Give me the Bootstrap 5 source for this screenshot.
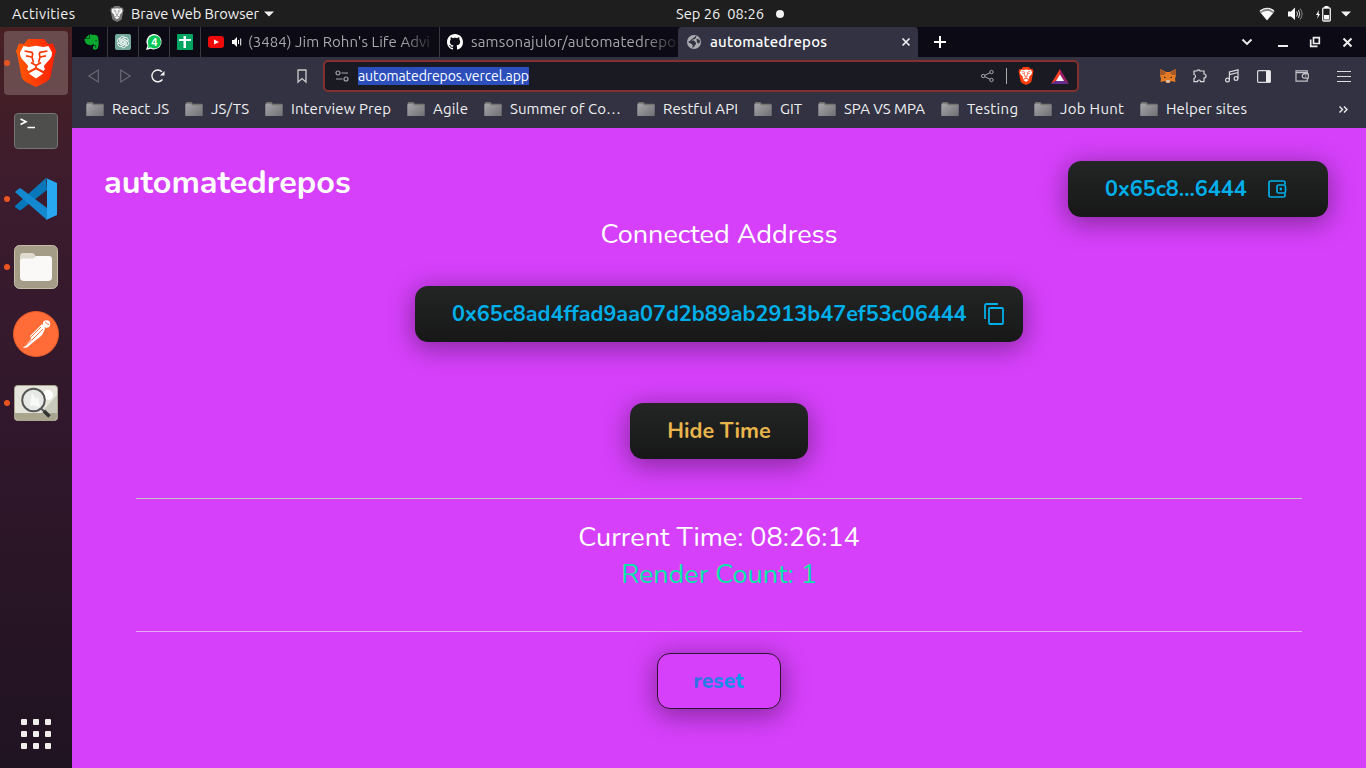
<!DOCTYPE html>
<html lang="en">
<head>
<meta charset="utf-8">
<meta name="viewport" content="width=device-width, initial-scale=1">
<title>automatedrepos</title>
<link href="https://cdn.jsdelivr.net/npm/bootstrap@5.3.0/dist/css/bootstrap.min.css" rel="stylesheet">
<style>
html,body{height:100%}
body{overflow:hidden;font-family:Ubuntu,"Noto Sans",sans-serif;font-size:15px;line-height:20px;color:#eee;background:#1e1e1e}
svg{display:block;flex:none;overflow:visible}
.desktop{width:1366px;height:768px}
.sysbar{display:grid;grid-template-columns:110px 566px 583px 29px 28px 25px 1fr;height:27px;background:#1e1e1e;color:#f2f2f2;align-items:center;font-size:14.67px}
.dock{width:72px;background:linear-gradient(#472023 0,#3b1b2e 25%,#30172b 55%,#201321 100%);padding-top:4px}
.tile{width:64px;height:64px;margin:0 4px 4px;border-radius:4px;position:relative}
.tile.active{background:#694a4d}
.tile.run::before{content:"";position:absolute;left:0;top:29px;width:6px;height:6px;border-radius:50%;background:#e95420}
.tabs{height:30px;background:#0c0a14;display:grid;grid-template-columns:36px 31px 31px 31px 239px 238px 240px 1fr}
.tb{display:flex;align-items:center;color:#a6a6ac;overflow:hidden;border-right:1px solid #3a3940;min-width:0}
.tb.gh{border:0}
.tb.on{background:#323242;border:0;border-radius:4px 4px 0 0;color:#fff;font-weight:500}
.faded{white-space:nowrap;-webkit-mask-image:linear-gradient(90deg,#000 84%,rgba(0,0,0,.15));mask-image:linear-gradient(90deg,#000 84%,rgba(0,0,0,.15))}
.toolbar{height:38px;background:#323242;display:grid;grid-template-columns:32px 31px 145px 27px 756px 97px 33px 32px 38px 43px 1fr;padding-left:16px;align-items:center}
.omni{height:32px;border:2px solid #84302f;border-radius:5px;background:#1a1a23;padding-left:10px;display:grid;grid-template-columns:23px 623px 25px 12px 33px 1fr;align-items:center}
.sel{background:#2c4fbc;color:#fff;display:inline-block;height:18px;line-height:18px;font-size:14px}
.marks{height:33px;background:#323242;padding:0 0 5px 14px}
.marks span{line-height:28px;color:#f0f0f2}
.lbl{white-space:pre;display:inline-block}
.site{background:#d640fb;font-family:Nunito,Lato,sans-serif;color:#fff;height:640px}
.brandline{height:88px;padding:33px 38px 0 32px}
.brandname{font-size:32.4px;font-weight:700;line-height:43px}
.cta{height:56px;border:0;border-radius:13px;background:linear-gradient(#232625,#171717);color:#00aee9;font-weight:700;font-size:21.6px;line-height:54px;box-shadow:0 5px 26px 2px rgba(0,0,0,.37);padding:0 37px;font-family:inherit}
.big{font-size:27px;line-height:37px;font-weight:400}
.rule{height:1px;width:1166px;background:#c6bfc4}
.reset{background:#d640fb;border:1px solid #2b1530;width:124px;padding:0;font-size:21px}
.reset span{background:linear-gradient(90deg,#3470e0,#009fe8);-webkit-background-clip:text;background-clip:text;color:transparent;font-weight:800}
</style>
</head>
<body>
<svg width="0" height="0" class="position-absolute">
<defs>
<linearGradient id="lion" x1="0" x2="1"><stop offset="0" stop-color="#ff5a00"/><stop offset=".55" stop-color="#ff3a0a"/><stop offset="1" stop-color="#ff1e00"/></linearGradient>
<linearGradient id="fold" x1="0" y1="0" x2="1" y2="1"><stop offset="0" stop-color="#a8a8ae"/><stop offset="1" stop-color="#707073"/></linearGradient>
<symbol id="face" viewBox="0 0 40 48">
<path d="M7.500 7 13 8 20 6.800 27 8 32.500 7 36 13.500Q36.500 16.500 34 20L28.500 26Q27 28 29 30L27.500 32 20 28 12.500 32 11 30Q13 28 11.500 26L6 20Q3.500 16.500 4 13.500Z" fill="#fff"/>
<path d="M13.500 34.500 20 31 26.500 34.500 20 39Z" fill="#fff" stroke="#fff"/>
<path d="M8.500 12 16 13.300 16.700 15 16 18 17.500 23.500M31.500 12 24 13.300 23.300 15 24 18 22.500 23.500M10 16.800 15.500 18M30 16.800 24.500 18M15 23.500 20 26.500 25 23.500M20 26V29" fill="none" stroke="currentColor" stroke-width="1.700"/>
</symbol>
<symbol id="shield" viewBox="0 0 40 48"><path d="M12 0H28L32 5 37 4.500 40 12 38.500 17 34.500 38Q33.500 41 30 43L20 48 10 43Q6.500 41 5.500 38L1.500 17 0 12 3 4.500 8 5Z"/></symbol>
<symbol id="folder" viewBox="0 0 18 15"><path d="M1 1Q1 .5 2 .5H6.500L7.500 2H17Q17.700 2 17.700 3V14H.3V3Z" fill="url(#fold)"/><path d="M1 1.200H6.500L7.300 2.500H17" fill="none" stroke="#77736e" stroke-width="1.300"/></symbol>
</defs>
</svg>
<div class="desktop d-flex flex-column">
<header class="sysbar">
  <div class="ps-2 ms-1"><span class="lbl" data-w="63">Activities</span></div>
  <div class="d-flex align-items-center">
    <svg width="14" height="16" style="color:#777"><use href="#shield" fill="#777"/><use href="#face"/></svg>
    <span class="lbl" style="margin-left:7px" data-w="128">Brave Web Browser</span>
    <svg width="10" height="6" style="margin-left:5px" viewBox="0 0 10 6"><path d="M0 .5H10L5 5.500Z" fill="#f2f2f2"/></svg>
  </div>
  <div class="d-flex align-items-center"><span class="lbl" data-w="88">Sep 26  08:26</span><svg width="8" height="8" style="margin-left:12px"><circle cx="4" cy="4" r="4" fill="#f2f2f2"/></svg></div>
  <svg width="16" height="14" viewBox="0 0 16 14"><path d="M.3 4.500Q8-2 15.700 4.500L8 13.500Z" fill="#888"/><path d="M2 6Q8 2 14 6L8 13.300Z" fill="#fff"/><path d="M1 4Q8-1.500 15 4" fill="none" stroke="#fff" stroke-width="1.200"/></svg>
  <svg width="15" height="14" viewBox="0 0 15 14"><path d="M0 4.500H3L7 .5V13L3 9.500H0Z" fill="#fff"/><path d="M8.700 4.500Q10.300 7 8.700 9.500M10.500 3Q13 7 10.500 11" fill="none" stroke="#ddd"/><path d="M12.200 1.500Q16 7 12.200 12.500" fill="none" stroke="#888"/></svg>
  <svg width="16" height="16" viewBox="0 0 16 16"><path d="M3 4 0 9H2L1 13 4 8H2.500Z" fill="#fff"/><rect x="6.700" y="2" width="7.600" height="13" rx="1" fill="none" stroke="#eee" stroke-width="1.300"/><path d="M8.500 0H12.500V2H8.500ZM8 9H13V13.500H8Z" fill="#fff"/></svg>
  <svg width="10" height="6" viewBox="0 0 10 6"><path d="M0 .5H10L5 5.500Z" fill="#f2f2f2"/></svg>
</header>
<div class="d-flex flex-fill">
<aside class="dock flex-shrink-0">
  <div class="tile active run d-flex align-items-center justify-content-center"><svg width="40" height="48" style="color:#f63b0b"><use href="#shield" fill="url(#lion)"/><use href="#face"/></svg></div>
  <div class="tile d-flex align-items-center justify-content-center"><svg width="44" height="36" viewBox="0 0 44 36"><rect x=".5" y=".5" width="43" height="35" rx="3.500" fill="#4e4e4c" stroke="#777472"/><path d="M6.500 6 12 8.700 6.500 11.500M13.500 14.500H21" fill="none" stroke="#fff" stroke-width="1.600"/></svg></div>
  <div class="tile run d-flex align-items-center justify-content-center"><svg width="42" height="42" viewBox="0 0 42 42"><path d="M31 0 0 28 0 29 4 32Q5 32.500 6 32L32 12Z" fill="#0877b9"/><path d="M0 14 4 10.500Q5 10 6 10.500L32 30V42Z" fill="#1489cf"/><path d="M31 0 42 5V37L31 42Q32 41 32 39V3Q32 1 31 0Z" fill="#29a8f2"/></svg></div>
  <div class="tile run d-flex align-items-center justify-content-center"><svg width="44" height="44" viewBox="0 0 44 44"><rect x=".5" y=".5" width="43" height="43" rx="5" fill="#a59c87" stroke="#c5bda9"/><path d="M6 18V11Q6 8 9 8H18Q20 8 21 10L22 12H35L37 18" fill="#dedacd"/><path d="M6 16Q6 13.500 9 13.500H18Q20 13.500 21 12L22 11H35Q38 11 38 14V32Q38 36 34 36H10Q6 36 6 32Z" fill="#faf9f7"/></svg></div>
  <div class="tile d-flex align-items-center justify-content-center"><svg style="margin-bottom:2px" width="46" height="46" viewBox="0 0 46 46"><circle cx="23" cy="23" r="22.500" fill="#ff6c37" stroke="#e85c2a"/><g fill="#fff"><circle cx="33.500" cy="13" r="3.700"/><path d="M29 13 17 25 18 28 11 36 9.500 37 14 36.500 23 29Q31 24 32 17Z"/></g><path d="M28 16 17 27M30 18 19 29M12 35 22 26M32 11 36 14" stroke="#ff6c37" stroke-width=".9"/></svg></div>
  <div class="tile run d-flex align-items-center justify-content-center"><svg width="44" height="36" viewBox="0 0 44 36"><rect x=".5" y=".5" width="43" height="35" rx="3" fill="#e5e5dc" stroke="#a9a591"/><path d="M27 28 43 10V28Z" fill="#c9cbbd"/><circle cx="34" cy="10" r="5" fill="#fff"/><path d="M1 28H43V32Q43 35 40 35H4Q1 35 1 32Z" fill="#aaa58f"/><circle cx="19.500" cy="15" r="11.300" fill="#e6e9e5" fill-opacity=".92" stroke="#555" stroke-width="1.900"/><path d="M16 20 18 8 22 14 24 12 26 22Z" fill="#f8faf8"/><path d="M27 23.500 31 27" stroke="#555" stroke-width="2"/><path d="M30 26 35.500 31.500" stroke="#333" stroke-width="3.600"/></svg></div>
  <svg class="mx-auto" style="margin-top:284px" width="30" height="30" viewBox="0 0 30 30" fill="#f1efed"><g id="r"><rect width="6" height="6" rx="1"/><rect x="12" width="6" height="6" rx="1"/><rect x="24" width="6" height="6" rx="1"/></g><use href="#r" y="12"/><use href="#r" y="24"/></svg>
</aside>
<main class="flex-fill d-flex flex-column">
<nav class="tabs">
  <div class="tb" style="padding-left:12px"><svg width="16" height="16" viewBox="0 0 16 16"><path d="M1 4.500 5 .5V4.500ZM5.500 1Q7-.5 8.500 1Q13 0 14 3Q15.700 10 13.500 14.500Q12.500 16 10 15.500Q8.500 15 9 12.500Q10 11 11.500 12V13.500H10.500Q12.500 14.500 12 11.500Q9.500 11.500 9 9.500Q8.500 12 6 11Q1.500 11 .5 6V5H5.500Z" fill="#0aa82f"/><path d="M11 6.500Q12.500 5.500 13 7.500Z" fill="#0c0a14"/></svg></div>
  <div class="tb" style="padding-left:7px"><svg width="16" height="16" viewBox="0 0 16 16"><rect width="16" height="16" rx="2" fill="#74aa9c"/><g fill="none" stroke="#fff" stroke-width=".8"><path id="k" d="M5 8.500V4.700A2.600 2.600 0 0 1 9.800 3.400L6.700 5.300V9.300"/><use href="#k" transform="rotate(60 8 8)"/><use href="#k" transform="rotate(120 8 8)"/><use href="#k" transform="rotate(180 8 8)"/><use href="#k" transform="rotate(240 8 8)"/><use href="#k" transform="rotate(300 8 8)"/></g></svg></div>
  <div class="tb" style="padding-left:7px"><svg width="16" height="16" viewBox="0 0 16 16"><path d="M8.500 0A7.700 7.700 0 1 1 4.800 14.700L0 16 1.500 11.500A7.700 7.700 0 0 1 8.500 0Z" fill="#fff"/><circle cx="8.400" cy="7.900" r="6.600" fill="#07c653"/><path d="M2 14 2.700 11 5 13.300Z" fill="#07c653"/><text x="8.400" y="12" text-anchor="middle" font-size="11" font-weight="700" fill="#fff">4</text></svg></div>
  <div class="tb" style="padding-left:7px"><svg width="16" height="16" viewBox="0 0 16 16"><rect width="16" height="16" rx="1" fill="#00a562"/><path d="M6.500 2H9V14H6.500ZM2 5H14V7H2Z" fill="#fff"/></svg></div>
  <div class="tb" style="padding-left:7px"><svg width="16" height="12" viewBox="0 0 16 12"><rect width="16" height="12" rx="3" fill="#f00b0b"/><path d="M6 3.500 11 6 6 8.500Z" fill="#fff"/></svg><svg class="ms-2" width="10" height="10" viewBox="0 0 10 10"><path d="M0 3H2L5 0V10L2 7H0Z" fill="#fff"/><path d="M6.500 3V7M8.700 1.500V8.500" stroke="#fff"/></svg><span class="faded" style="width:184px;margin-left:6px"><span class="lbl" data-w="182">(3484) Jim Rohn's Life Advi</span></span></div>
  <div class="tb gh" style="padding-left:7px"><svg width="16" height="16" viewBox="0 0 16 16"><path fill="#fff" d="M8 0C3.580 0 0 3.580 0 8c0 3.540 2.290 6.530 5.470 7.590.4.070.55-.17.55-.38 0-.19-.01-.82-.01-1.490-2.010.37-2.530-.49-2.690-.94-.09-.23-.48-.94-.82-1.130-.28-.15-.68-.52-.01-.53.63-.01 1.080.58 1.230.82.72 1.210 1.870.87 2.330.66.070-.52.28-.87.51-1.070-1.780-.2-3.640-.89-3.640-3.950 0-.87.31-1.590.82-2.150-.08-.2-.36-1.020.08-2.120 0 0 .67-.21 2.200.82.64-.18 1.320-.27 2-.27s1.360.09 2 .27c1.530-1.040 2.200-.82 2.200-.82.44 1.100.16 1.920.08 2.120.51.56.82 1.270.82 2.150 0 3.070-1.870 3.750-3.650 3.950.29.25.54.73.54 1.480 0 1.070-.01 1.930-.01 2.200 0 .21.15.46.55.38A8.010 8.010 0 0 0 16 8c0-4.420-3.580-8-8-8z"/></svg><span class="faded ms-2" style="width:206px"><span class="lbl" data-w="205">samsonajulor/automatedrepo</span></span></div>
  <div class="tb on" style="padding-left:9px"><svg width="14" height="14" viewBox="0 0 14 14"><circle cx="7" cy="7" r="7" fill="#a9abb0"/><path d="M9 1 8 3.500 5.500 4 4 6H7L8.500 8 8 10 6 10.500 5 8.500 1.500 7M5 12 7.500 11.500M10 4 12.500 5.500 12 8 10.500 7.500Z" fill="#323242" stroke="#323242"/></svg><span class="lbl" style="margin-left:9px;width:192px"><span class="lbl" data-w="117">automatedrepos</span></span><svg width="8" height="8" viewBox="0 0 8 8"><path d="M.5.5 7.500 7.500M7.500.5.5 7.500" stroke="#eee" stroke-width="1.700"/></svg></div>
  <div class="d-flex align-items-center" style="padding-left:16px"><svg width="12" height="12"><path d="M6 0V12M0 6H12" stroke="#fff" stroke-width="2"/></svg><svg style="margin-left:296px" width="10" height="6"><path d="M.5.5 5 5 9.500.5" fill="none" stroke="#eee" stroke-width="1.900"/></svg><svg style="margin-left:26px;margin-top:7px" width="10" height="2"><path d="M0 1H10" stroke="#eee" stroke-width="2"/></svg><svg style="margin-left:22px" width="10" height="10"><path d="M3.500.7H9.300V6.500H3.500ZM.7 2.500V9.300H7.500" fill="none" stroke="#eee" stroke-width="1.700"/></svg><svg style="margin-left:23px" width="9" height="9"><path d="M.5.5 8.500 8.500M8.500.5.5 8.500" stroke="#eee" stroke-width="2"/></svg></div>
</nav>
<div class="toolbar">
  <svg width="11" height="14"><path d="M10.300 1V13L.8 7Z" fill="none" stroke="#696975" stroke-width="1.200"/></svg>
  <svg width="11" height="14"><path d="M.7 1V13L10.200 7Z" fill="none" stroke="#696975" stroke-width="1.200"/></svg>
  <svg width="14" height="14"><path d="M11.500 10.500A5.900 5.900 0 1 1 11 2.700" fill="none" stroke="#f4f4f4" stroke-width="1.400"/><path d="M13.500 2V6.500H9Z" fill="#f4f4f4"/></svg>
  <svg width="10" height="14" style="margin-left:1px"><path d="M1 1H9V13L5 9.500 1 13Z" fill="none" stroke="#ccc" stroke-width="1.300"/></svg>
  <div class="omni">
    <svg width="14" height="12" fill="none" stroke="#a5a5a9" stroke-width="1.200"><circle cx="3" cy="3" r="2"/><circle cx="11" cy="9" r="2"/><path d="M6.500 3H13M1 9H7.500"/></svg>
    <div><span class="sel lbl" data-w="171">automatedrepos.vercel.app</span></div>
    <svg width="13" height="12" fill="none" stroke="#a8a8ac"><circle cx="2.200" cy="6" r="1.700"/><circle cx="10.500" cy="2" r="1.700"/><circle cx="10.500" cy="10" r="1.700"/><path d="M4 5.200 9 2.700M4 6.800 9 9.300"/></svg>
    <svg width="1" height="16"><rect width="1" height="16" fill="#aaa"/></svg>
    <svg width="16" height="18" viewBox="0 0 16 18" style="color:#f63b0b"><use href="#shield" width="16" height="18" fill="#fb3c0d"/><use href="#face" width="16" height="18"/></svg>
    <svg width="18" height="15" viewBox="0 0 18 15"><path d="M9 0 0 15 9 9Z" fill="#ff3e24"/><path d="M9 0 18 15 9 9Z" fill="#9e1f63"/><path d="M0 15H18L9 9Z" fill="#662d91"/><path d="M9 5.500 5 12H13Z" fill="#fff"/></svg>
  </div>
  <svg class="ms-auto" width="16" height="14" viewBox="0 0 16 14"><path d="M.5 0 6 3H10L15.500 0 16 6 15 10 15.500 13 11 12 9.500 14H6.500L5 12 .5 13 1 10 0 6Z" fill="#e77b24"/><path d="M.5 0 6 4 4 6 0 6ZM15.500 0 10 4 12 6 16 6Z" fill="#a55a29"/><path d="M4 7.500 6.500 9H4ZM12 7.500 9.500 9H12Z" fill="#333"/><path d="M6.500 11H9.500L10 13.500H6Z" fill="#d4c4b9"/></svg>
  <svg style="margin-left:16px" width="15" height="14"><path d="M2 2H5Q5 .8 6.500.8T8 2H12V5Q14 5 14 7T12 9V12.700H8.500Q8.500 11 7 11T5.500 12.700H2V9.500Q3.500 9 3.500 7.300T2 5.500Z" fill="none" stroke="#d9d9dc" stroke-width="1.200"/></svg>
  <svg style="margin-left:16px" width="14" height="14" fill="none" stroke="#d9d9dc" stroke-width="1.200"><circle cx="2.500" cy="11" r="1.900"/><circle cx="11" cy="9.500" r="1.900"/><path d="M4.400 11V3L13 .8V9.500M4.400 5.700 13 3.500"/></svg>
  <svg style="margin-left:16px" width="14" height="13"><rect x=".6" y=".6" width="12.800" height="11.800" rx="1" fill="none" stroke="#d9d9dc" stroke-width="1.200"/><path d="M9 1H13V12H9Z" fill="#eee"/></svg>
  <svg style="margin-left:16px" width="14" height="12"><path d="M12.300 3.500V.8H1V11.200H12.300V8.500M1 2.700H12.300M13.300 3.800H9.500A2.200 2.200 0 0 0 9.500 8.200H13.300ZM10 6H11.200" fill="none" stroke="#c2c2c6" stroke-width="1.200"/></svg>
  <svg style="margin-left:15px" width="14" height="11"><path d="M0 .5H14M0 5.500H14M0 10.500H14" stroke="#ddd"/></svg>
</div>
<div class="marks d-flex align-items-center" id="marks"></div>
<section class="site d-flex flex-column align-items-center">
  <div class="brandline w-100 d-flex justify-content-between align-items-start">
    <h1 class="brandname m-0"><span class="lbl">automatedrepos</span></h1>
    <button class="cta d-flex align-items-center" style="width:260px"><span class="lbl">0x65c8...6444</span><svg style="margin-left:21px" width="18" height="18" fill="none" stroke="#00aee9"><path d="M17 4.500V2.500Q17 1 15.500 1H2.500Q1 1 1 2.500V15.500Q1 17 2.500 17H15.500Q17 17 17 15.500V13.500" stroke-width="1.700"/><rect x="9" y="5" width="8.500" height="8" rx="1.500" stroke-width="1.700"/><path d="M11.700 7.700H14V10.300H11.700Z" fill="#00aee9" stroke="none"/></svg></button>
  </div>
  <div class="big" style="height:36px;line-height:38px"><span class="lbl">Connected Address</span></div>
  <button class="cta d-flex align-items-center" style="margin-top:34px;width:608px;padding-right:19px"><span class="lbl">0x65c8ad4ffad9aa07d2b89ab2913b47ef53c06444</span><svg class="ms-auto" width="20" height="22" fill="none" stroke="#00aee9" stroke-width="1.800"><path d="M14 1H2.500Q1 1 1 2.500V16"/><rect x="5" y="5" width="14" height="16" rx="1"/></svg></button>
  <button class="cta text-center" style="margin-top:61px;width:178px;color:#e9b44b"><span class="lbl">Hide Time</span></button>
  <div class="rule" style="margin-top:39px"></div>
  <div class="big" style="margin-top:20px"><span class="lbl">Current Time: 08:26:14</span></div>
  <div class="big" style="color:#00e8a8"><span class="lbl">Render Count: 1</span></div>
  <div class="rule" style="margin-top:38px;background:#e9a4f4"></div>
  <button class="cta reset" style="margin-top:21px"><span class="lbl">reset</span></button>
</section>
</main>
</div>
</div>
<script src="https://cdn.jsdelivr.net/npm/bootstrap@5.3.0/dist/js/bootstrap.bundle.min.js"></script>
<script>
// Bookmark folders and the width of each label
const folders = [["React JS",57],["JS/TS",38],["Interview Prep",100],["Agile",35],["Summer of Co…",111],["Restful API",75],["GIT",22],["SPA VS MPA",81],["Testing",51],["Job Hunt",64],["Helper sites",81]];
document.getElementById("marks").innerHTML = folders.map(([t, w]) =>
  `<div class="d-flex align-items-center me-3"><svg class="me-2" width="18" height="15"><use href="#folder"/></svg><span class="lbl" data-w="${w}">${t}</span></div>`).join("") +
  `<svg class="ms-auto" style="margin-right:18px" width="9" height="7"><path d="M.5.5 3.500 3.500.5 6.500M5 .5 8 3.500 5 6.500" fill="none" stroke="#eee" stroke-width="1.400"/></svg>`;
// Track each label so that it fills its slot
document.querySelectorAll("[data-w]").forEach(el => {
  const s = (el.dataset.w - el.getBoundingClientRect().width) / (el.textContent.length - 1);
  el.style.letterSpacing = s + "px";
  el.style.marginRight = -s + "px";
});
</script>
</body>
</html>
